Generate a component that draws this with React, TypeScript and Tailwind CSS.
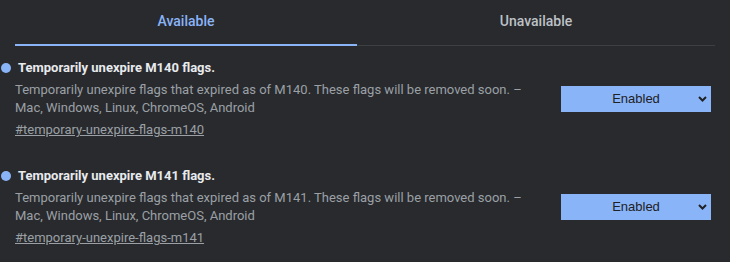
import React from 'react';

interface Flag {
  milestone: string;
}

const flags: Flag[] = [{ milestone: 'M140' }, { milestone: 'M141' }];

function SelectBox() {
  return (
    <div className="relative mr-[4px] mt-[27px] flex h-[26px] w-[150px] shrink-0 items-center justify-center bg-[#8ab4f8] text-[13px] text-[#202124] [font-family:'Liberation_Sans',Arial,sans-serif]">
      <span>Enabled</span>
      <svg className="absolute right-[4px] top-[10px]" width="9" height="6" viewBox="0 0 9 6">
        <path d="M1 1 L4.5 4.5 L8 1" fill="none" stroke="#202124" strokeWidth="2" />
      </svg>
    </div>
  );
}

function FlagRow({ milestone }: Flag) {
  const title = `Temporarily unexpire ${milestone} flags.`;
  const desc = `Temporarily unexpire flags that expired as of ${milestone}. These flags will be removed soon. – Mac, Windows, Linux, ChromeOS, Android`;
  const link = `#temporary-unexpire-flags-${milestone.toLowerCase()}`;
  return (
    <div className="relative flex justify-between">
      {/* modified marker */}
      <span className="absolute left-[-14px] top-[4px] h-[10px] w-[10px] rounded-full bg-[#8ab4f8]" />
      <div className="w-[525px]">
        <h2 className="pl-[3px] text-[13px] font-bold leading-[18px] text-[#e8eaed]">{title}</h2>
        <p className="mt-[4px] text-[13px] leading-[18px] text-[#9aa0a6]">{desc}</p>
        <a className="mt-[4px] block text-[13px] leading-[18px] text-[#9aa0a6] underline">{link}</a>
      </div>
      <SelectBox />
    </div>
  );
}

export default function App() {
  return (
    <div className="h-[262px] w-[730px] overflow-hidden bg-[#292a2d] [font-family:Roboto,'Liberation_Sans',sans-serif]">
      <div className="ml-[15px] w-[700px]">
        <div className="flex h-[46px] border-b border-[#3c4043]">
          <div className="relative flex w-[342px] items-center justify-center pb-[3px] text-[14px] font-medium text-[#8ab4f8]">
            Available
            <span className="absolute bottom-[-1px] left-0 right-0 h-[2px] bg-[#8ab4f8]" />
          </div>
          <div className="flex flex-1 items-center justify-center pb-[3px] text-[14px] font-medium text-[#bdc1c6]">
            Unavailable
          </div>
        </div>
        <div className="mt-[13px] flex flex-col gap-[28px]">
          {flags.map((f) => (
            <FlagRow key={f.milestone} milestone={f.milestone} />
          ))}
        </div>
      </div>
    </div>
  );
}
